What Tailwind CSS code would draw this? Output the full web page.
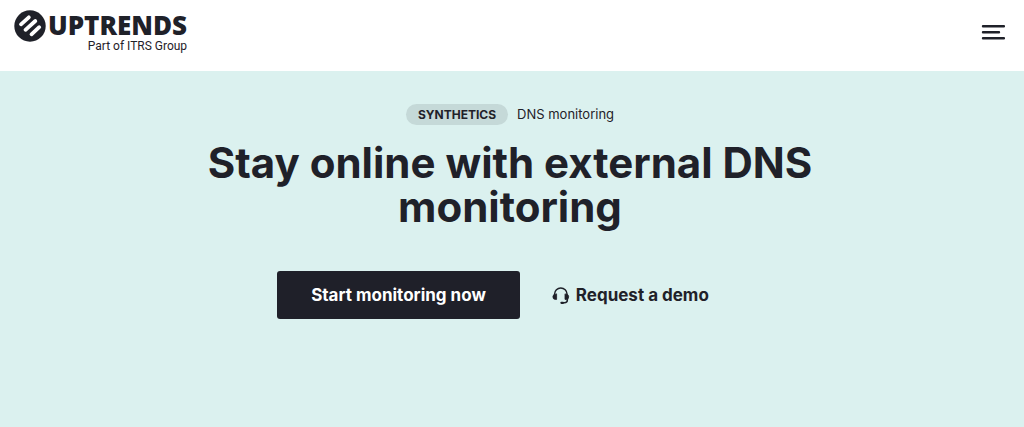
<!DOCTYPE html>
<html lang="en">
<head>
<meta charset="utf-8">
<meta name="viewport" content="width=device-width, initial-scale=1">
<title>Uptrends – DNS monitoring</title>
<script src="https://cdn.jsdelivr.net/npm/@tailwindcss/browser@4"></script>
</head>
<body class="flex min-h-screen flex-col bg-[#dbf1ef] font-['Inter',sans-serif] text-[#1f2129]">
<header class="flex h-[71px] items-start justify-between bg-white pl-3.5 pr-[19px]">
  <a href="#" class="flex items-start pt-2.5">
    <svg class="size-8 shrink-0" viewBox="0 0 32 32" aria-hidden="true">
      <circle cx="16" cy="16" r="15.7" fill="#1f2129"/>
      <g stroke="#fff" stroke-width="3.8" stroke-linecap="round">
        <path d="M7 14.3 14.8 7.3M11.5 19.8 21.3 11M17.5 24.3 25.2 17.2"/>
      </g>
    </svg>
    <span class="ml-0.5 flex flex-col items-end">
      <span class="font-['Open_Sans',sans-serif] text-[26px] leading-[30px] font-extrabold">UPTRENDS</span>
      <span class="font-['Roboto',sans-serif] text-[12px] leading-[12px]">Part of ITRS Group</span>
    </span>
  </a>
  <button type="button" aria-label="Menu" class="mt-5 p-0">
    <svg class="h-6 w-6" viewBox="0 0 24 24" fill="none" stroke="#1f2129" stroke-width="2.4" stroke-linecap="round" aria-hidden="true">
      <path d="M2 6.2H23M2 12.2H18M2 18.2H23"/>
    </svg>
  </button>
</header>
<main class="flex flex-col items-center pt-[33px] pr-1 text-center">
  <p class="flex items-center gap-[9px]">
    <span class="rounded-full bg-[#c5d9d8] px-3 text-[12px] leading-[21px] font-bold">SYNTHETICS</span>
    <span class="text-[13px] leading-[21px]">DNS monitoring</span>
  </p>
  <h1 class="mt-4 max-w-[680px] text-[42px] leading-[44px] font-bold">Stay online with external DNS monitoring</h1>
  <div class="mt-[42px] flex items-center">
    <button type="button" class="h-12 rounded-[3px] bg-[#1f2029] px-[34px] pt-0.5 text-[17px] font-bold text-white">Start monitoring now</button>
    <a href="#" class="flex h-12 items-center gap-1.5 pl-8 pr-[34px] pt-0.5 text-[17px] font-bold">
      <svg class="size-[18px]" viewBox="0 0 18 18" fill="none" stroke="#1f2129" stroke-width="1.5" stroke-linecap="round" aria-hidden="true">
        <path d="M2.6 8V7A6.2 6 0 0 1 15 7V8M15.4 11.5V12.8Q15.4 15.8 12.4 15.8H10.5"/>
        <path d="M4.6 7.2V12.4H3.4Q.9 12.4.9 9.8T3.4 7.2ZM13 7.2V12.4H14.2Q16.7 12.4 16.7 9.8T14.2 7.2Z" fill="#1f2129" stroke-width=".8"/>
        <path d="M9.4 15.8H11" stroke-width="2.2"/>
      </svg>
      Request a demo
    </a>
  </div>
</main>
</body>
</html>
